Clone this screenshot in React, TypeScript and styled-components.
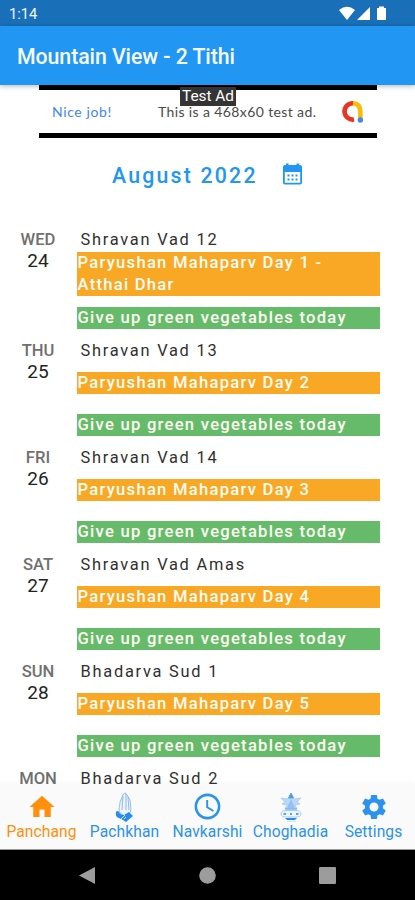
import React from "react";
import styled, { createGlobalStyle } from "styled-components";
import { MdHome, MdSettings, MdAccessTime } from "react-icons/md";

const GlobalStyle = createGlobalStyle`
  * { box-sizing: border-box; }
  body { margin: 0; background: #fff; font-family: Roboto, "Liberation Sans", sans-serif; }
`;

const Screen = styled.div`
  width: 415px;
  height: 900px;
  display: flex;
  flex-direction: column;
  overflow: hidden;
  background: #fff;
`;

const StatusBar = styled.div`
  flex: 0 0 26px;
  display: flex;
  align-items: center;
  justify-content: space-between;
  padding: 2px 28px 0 9px;
  background: #1a70b8;
  color: #eef6fd;
  font-size: 14.7px;
  font-weight: 400;
`;

const StatusIcons = styled.svg`
  display: block;
  width: 48px;
  height: 15px;
  margin-top: -1px;
`;

const AppBar = styled.header`
  flex: 0 0 59px;
  display: flex;
  align-items: center;
  padding: 1px 17px 0;
  background: #2196f3;
  color: #f7fcff;
  font-size: 21.3px;
  font-weight: 500;
  letter-spacing: -0.07px;
  z-index: 1;
  box-shadow: 0 1px 5px rgba(0, 0, 0, 0.3);
`;

const AdBanner = styled.section`
  position: relative;
  flex: 0 0 53px;
  width: 338px;
  margin-left: 39px;
  display: flex;
  align-items: center;
  padding: 0 13px;
  border-top: 5px solid #000;
  border-bottom: 5px solid #000;
  z-index: 2;
  background: #fff;
  font-family: Lato, sans-serif;
  font-size: 14px;
  color: #4a4a4a;
`;

const AdLead = styled.span`
  width: 106px;
  color: #4285f4;
  font-size: 14px;
  letter-spacing: 0.6px;
`;

const AdCopy = styled.span`
  flex: 1;
  letter-spacing: 0.38px;
  white-space: nowrap;
`;

const AdLabel = styled.span`
  position: absolute;
  left: 141px;
  top: -3px;
  width: 56px;
  height: 19px;
  line-height: 19px;
  text-align: center;
  background: #343434;
  color: #fff;
  font-family: Roboto, sans-serif;
  font-size: 15.4px;
  white-space: nowrap;
`;

const AdLogo = styled.svg`
  flex: none;
  width: 23px;
  height: 23px;
`;

const MonthBar = styled.div`
  flex: 0 0 89px;
  display: flex;
  align-items: flex-start;
  padding: 24px 0 0 112px;
  color: #2196f3;
`;

const Month = styled.h1`
  margin: 0;
  width: 170px;
  font-size: 21.3px;
  line-height: 28px;
  font-weight: 500;
  letter-spacing: 2.2px;
  white-space: nowrap;
`;

const CalendarIcon = styled.svg`
  width: 21px;
  height: 23px;
  margin-top: 1px;
`;

const DayList = styled.main`
  flex: 1 1 0;
  min-height: 0;
  overflow: hidden;
`;

const DayRow = styled.article<{ $height: number }>`
  display: flex;
  height: ${(p) => p.$height}px;
`;

const DateCell = styled.div`
  width: 77px;
  display: flex;
  flex-direction: column;
  align-items: center;
  color: #222;
`;

const Weekday = styled.span`
  height: 23px;
  line-height: 25px;
  padding-right: 1px;
  font-size: 16.6px;
  font-weight: 500;
  color: #707070;
`;

const DayNumber = styled.span`
  height: 22px;
  line-height: 22px;
  padding-right: 1px;
  font-size: 19px;
`;

const Events = styled.div`
  width: 303px;
  display: flex;
  flex-direction: column;
`;

const Tithi = styled.div`
  flex: 0 0 24.5px;
  padding-left: 3.5px;
  line-height: 25px;
  font-size: 16.4px;
  letter-spacing: 1.75px;
  color: #303030;
  white-space: nowrap;
`;

const Tag = styled.div<{ $tone: "festival" | "diet"; $gap: number }>`
  margin-top: ${(p) => p.$gap}px;
  padding-left: 0.5px;
  background: ${(p) => (p.$tone === "festival" ? "#f9a825" : "#66bb6a")};
  color: #fffdf3;
  font-size: 16.6px;
  font-weight: 500;
  line-height: 22px;
  letter-spacing: 1.26px;
  white-space: pre-line;
`;

const TabBar = styled.nav`
  flex: 0 0 66px;
  display: grid;
  grid-template-columns: repeat(5, 83px);
  background: #fafafa;
  border-bottom: 1px solid #999;
  z-index: 1;
  box-shadow: 0 -1px 4px rgba(0, 0, 0, 0.04);
`;

const Tab = styled.div<{ $active?: boolean }>`
  display: flex;
  flex-direction: column;
  align-items: center;
  padding-top: 7px;
  color: ${(p) => (p.$active ? "#ff8f0d" : "#2b92ee")};
`;

const TabIcon = styled.span`
  height: 31px;
  display: flex;
  align-items: center;
`;

const TabLabel = styled.span`
  line-height: 21px;
  font-size: 15.6px;
  letter-spacing: 0.1px;
`;

const SystemBar = styled.footer`
  flex: 0 0 50px;
  display: flex;
  justify-content: space-between;
  align-items: center;
  padding: 0 79px;
  background: #000;
`;

const SystemIcon = styled.svg`
  width: 17px;
  height: 17px;
  fill: #9c9c9c;
`;

const HandsIcon = () => (
  <svg width="20" height="30" viewBox="0 0 20 30" fill="none" stroke="#76abe6" strokeWidth="0.8">
    <path d="M5 21 C3 18 5 14 5 10 L8 3 Q10-1 12 3 L15 8 L16 17 Q16 20 13 23 L9 24Z" fill="#edf4fd" />
    <path d="M8 4 L7 18 M11 2 L11 18 M13 5 L14 18" />
    <path d="M1 20 Q2 18 4 20 Q5 23 9 23 L14 20 L18 24 L11 30 L8 28 L4 26 Q0 25 1 20Z" fill="#268df0" stroke="none" />
    <path d="M6 27 L10 23 M9 27 L11 25" stroke="#fff" />
  </svg>
);

const KalashIcon = () => (
  <svg width="24" height="30" viewBox="0 0 24 30" fill="none" stroke="#5da0e9" strokeWidth="0.9">
    <path d="M12 1 L15 7 L22 6 L18 10 L21 12 L16 13 L18 17 H6 L8 13 L3 12 L6 10 L2 6 L9 7Z" fill="#bad7f6" stroke="#a8ccf4" />
    <path d="M12 1 L9.5 6 H14.5Z" fill="#4397ec" />
    <path d="M12 7 L8 16 H16Z" fill="#94c1f2" stroke="none" />
    <path d="M6 17 H18" />
    <path d="M7 18.5 H17 Q22 18.5 22 22 Q22 25 17 25 H7 Q2 25 2 22 Q2 18.5 7 18.5Z" fill="#edf5fd" stroke="#a0c8f3" />
    <path d="M4.5 22 H7 M11 22 H13 M17 22 H19.5" strokeWidth="2" />
    <path d="M6 26 H18 L16 28 H8Z" fill="#258def" stroke="none" />
    <path d="M8 29.3 H17" stroke="#c5def9" />
  </svg>
);

type Day = { weekday: string; date?: number; tithi: string; festival?: string; twoLines?: boolean };

const days: Day[] = [
  { weekday: "WED", date: 24, tithi: "Shravan Vad 12", festival: "Paryushan Mahaparv Day 1 -\nAtthai Dhar", twoLines: true },
  { weekday: "THU", date: 25, tithi: "Shravan Vad 13", festival: "Paryushan Mahaparv Day 2" },
  { weekday: "FRI", date: 26, tithi: "Shravan Vad 14", festival: "Paryushan Mahaparv Day 3" },
  { weekday: "SAT", date: 27, tithi: "Shravan Vad Amas", festival: "Paryushan Mahaparv Day 4" },
  { weekday: "SUN", date: 28, tithi: "Bhadarva Sud 1", festival: "Paryushan Mahaparv Day 5" },
  { weekday: "MON", tithi: "Bhadarva Sud 2" },
];

const tabs = [
  { label: "Panchang", icon: <MdHome size={30} />, active: true },
  { label: "Pachkhan", icon: <HandsIcon /> },
  { label: "Navkarshi", icon: <MdAccessTime size={31} /> },
  { label: "Choghadia", icon: <KalashIcon /> },
  { label: "Settings", icon: <MdSettings size={30} /> },
];

export default function App() {
  return (
    <Screen>
      <GlobalStyle />
      <StatusBar>
        <span>1:14</span>
        <StatusIcons viewBox="0 0 48 15" fill="#fff">
          <path d="M0 4 Q8-2.5 16 4 L8 14Z" />
          <path d="M31 1 V14 H18Z" />
          <path d="M38 2 H40 V0.5 H45 V2 H47 V14 H38Z" />
        </StatusIcons>
      </StatusBar>
      <AppBar>Mountain View - 2 Tithi</AppBar>
      <AdBanner>
        <AdLead>Nice job!</AdLead>
        <AdCopy>This is a 468x60 test ad.</AdCopy>
        <AdLogo viewBox="0 0 23 23" fill="none" strokeWidth="4.6">
          <path d="M12 3.2 Q19.4 3.5 19.4 12 V18" stroke="#fbbc04" />
          <path d="M13 19.5 A8.2 8.2 0 1 1 12 3.2" stroke="#ea3323" />
          <circle cx="19.4" cy="20" r="2.7" fill="#4285f4" />
        </AdLogo>
        <AdLabel>Test Ad</AdLabel>
      </AdBanner>
      <MonthBar>
        <Month>August 2022</Month>
        <CalendarIcon viewBox="0 0 21 23">
          <path
            fill="#2196f3"
            fillRule="evenodd"
            d="M4 0.5 H6.5 V2 H14.5 V0.5 H17 V2 H18 Q20 2 20 4 V19.5 Q20 21.5 18 21.5 H3 Q1 21.5 1 19.5 V4 Q1 2 3 2 H4Z M2.8 9 V19.8 H18.2 V9Z"
          />
          <path stroke="#2196f3" strokeWidth="2" strokeDasharray="2 2" d="M5.5 12.5 H15.5 M5.5 16.5 H15.5" />
        </CalendarIcon>
      </MonthBar>
      <DayList>
        {days.map((day) => (
          <DayRow key={day.weekday} $height={day.twoLines ? 111 : day.date ? 107 : 25}>
            <DateCell>
              <Weekday>{day.weekday}</Weekday>
              {day.date && <DayNumber>{day.date}</DayNumber>}
            </DateCell>
            <Events>
              <Tithi>{day.tithi}</Tithi>
              {day.festival && (
                <>
                  <Tag $tone="festival" $gap={day.twoLines ? 0 : 8.5}>{day.festival}</Tag>
                  <Tag $tone="diet" $gap={day.twoLines ? 11 : 20}>Give up green vegetables today</Tag>
                </>
              )}
            </Events>
          </DayRow>
        ))}
      </DayList>
      <TabBar>
        {tabs.map((tab) => (
          <Tab key={tab.label} $active={tab.active}>
            <TabIcon>{tab.icon}</TabIcon>
            <TabLabel>{tab.label}</TabLabel>
          </Tab>
        ))}
      </TabBar>
      <SystemBar>
        <SystemIcon viewBox="0 0 17 17"><path d="M16 0 V17 L0 8.5Z" /></SystemIcon>
        <SystemIcon viewBox="0 0 17 17"><circle cx="8.5" cy="8.5" r="8.3" /></SystemIcon>
        <SystemIcon viewBox="0 0 17 17"><rect width="17" height="17" rx="1.2" /></SystemIcon>
      </SystemBar>
    </Screen>
  );
}
